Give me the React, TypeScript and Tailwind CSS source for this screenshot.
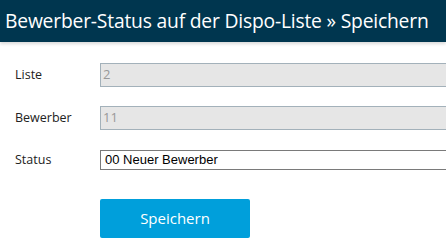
import React from "react";

export default function App() {
  const sans = { fontFamily: '"Open Sans", "Noto Sans", sans-serif' };
  return (
    <div className="w-[446px] h-[242px] overflow-hidden bg-white" style={sans}>
      <div className="h-[42px] bg-[#00364f] flex items-center pl-[5px] shadow-[0_2px_3px_rgba(0,0,0,0.15)]">
        <h1 className="text-white text-[19.3px] leading-none whitespace-nowrap tracking-[-0.2px]">
          Bewerber-Status auf der Dispo-Liste » Speichern
        </h1>
      </div>
      <div className="pt-[21px] flex flex-col">
        <div className="flex items-center h-[24px]">
          <label className="w-[100px] shrink-0 pl-[15px] text-[12.5px] text-[#222]">Liste</label>
          <div className="w-[360px] shrink-0 h-[24px] bg-[#e6e6e6] border border-[#a3b1ba] flex items-center pl-[2px] text-[13px] text-[#999]">
            2
          </div>
        </div>
        <div className="flex items-center h-[24px] mt-[19px]">
          <label className="w-[100px] shrink-0 pl-[15px] text-[12.5px] text-[#222]">Bewerber</label>
          <div className="w-[360px] shrink-0 h-[24px] bg-[#e6e6e6] border border-[#a3b1ba] flex items-center pl-[2px] text-[13px] text-[#999]">
            11
          </div>
        </div>
        <div className="flex items-center h-[20px] mt-[20px]">
          <label className="w-[100px] shrink-0 pl-[15px] text-[12.5px] text-[#222]">Status</label>
          <div
            className="w-[360px] shrink-0 h-[20px] bg-white border border-[#7a7a7a] flex items-center pl-[4px] text-[13px] text-black"
            style={{ fontFamily: '"Liberation Sans", Arial, sans-serif' }}
          >
            00 Neuer Bewerber
          </div>
        </div>
        <div className="pl-[100px] mt-[29px]">
          <button className="w-[150px] h-[39px] bg-[#009fdb] rounded-[2px] text-white text-[15px]">
            Speichern
          </button>
        </div>
      </div>
    </div>
  );
}
